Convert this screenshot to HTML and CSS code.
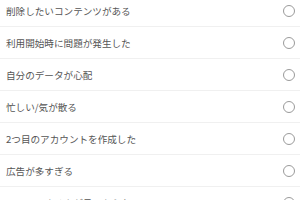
FILE: index.html
```html
<!DOCTYPE html>
<html lang="ja">
<head>
  <meta charset="UTF-8" />
  <title>理由を選択</title>
  <link rel="stylesheet" href="styles.css">
</head>
<body>
  <ul class="reason-list">
    <li class="reason"><span>削除したいコンテンツがある</span><span class="radio"></span></li>
    <li class="reason"><span>利用開始時に問題が発生した</span><span class="radio"></span></li>
    <li class="reason"><span>自分のデータが心配</span><span class="radio"></span></li>
    <li class="reason"><span>忙しい/気が散る</span><span class="radio"></span></li>
    <li class="reason"><span>2つ目のアカウントを作成した</span><span class="radio"></span></li>
    <li class="reason"><span>広告が多すぎる</span><span class="radio"></span></li>
    <li class="reason"><span>フォローする人が見つからない</span><span class="radio"></span></li>
  </ul>
</body>
</html>
```
FILE: styles.css
```css
body {
  margin: 0;
  background: #fff;
  font-family: "Noto Sans CJK JP", "Noto Sans", sans-serif;
  overflow: hidden;
}
.reason-list {
  list-style: none;
  margin: -5px 0 0 0;
  padding: 0;
}
.reason {
  height: 31px;
  border-bottom: 1px solid #f0f0f0;
  display: flex;
  align-items: center;
  justify-content: space-between;
  padding: 0 5px 0 6px;
  font-size: 9.6px;
  color: #555;
}
.radio {
  width: 10px;
  height: 10px;
  border: 1.5px solid #9a9a9a;
  border-radius: 50%;
}
```
